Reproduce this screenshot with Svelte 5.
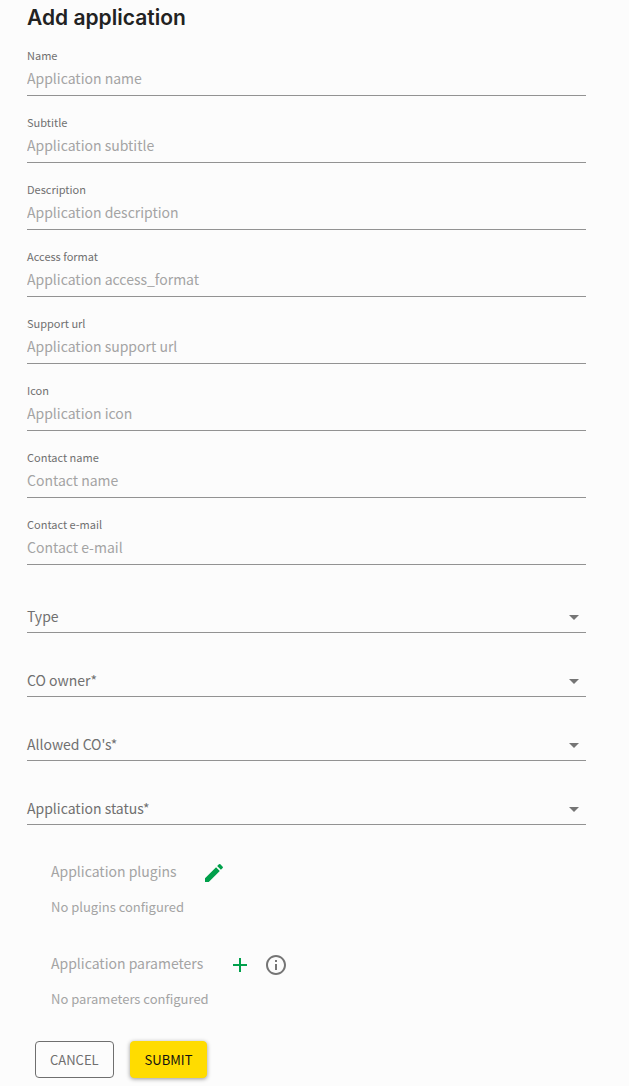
<script>
  const textFields = [
    { id: "name", label: "Name", placeholder: "Application name" },
    { id: "subtitle", label: "Subtitle", placeholder: "Application subtitle" },
    { id: "description", label: "Description", placeholder: "Application description" },
    { id: "access_format", label: "Access format", placeholder: "Application access_format" },
    { id: "support_url", label: "Support url", placeholder: "Application support url" },
    { id: "icon", label: "Icon", placeholder: "Application icon" },
    { id: "contact_name", label: "Contact name", placeholder: "Contact name" },
    { id: "contact_email", label: "Contact e-mail", placeholder: "Contact e-mail" }
  ];

  const selectFields = [
    { id: "type", label: "Type", options: ["Video", "Music", "Webinar", "Dialogue"] },
    { id: "owner", label: "CO owner*", options: ["Production", "Education"] },
    { id: "allowed", label: "Allowed CO's*", options: ["Production", "Education"] },
    { id: "status", label: "Application status*", options: ["Active", "Inactive"] }
  ];

  let values = $state({
    name: "",
    subtitle: "",
    description: "",
    access_format: "",
    support_url: "",
    icon: "",
    contact_name: "",
    contact_email: "",
    type: "",
    owner: "",
    allowed: "",
    status: ""
  });

  function handleSubmit(event) {
    event.preventDefault();
  }
</script>

<main>
  <h1>Add application</h1>

  <form onsubmit={handleSubmit}>
    <div class="text-fields">
      {#each textFields as field}
        <div class="field">
          <label for={field.id}>{field.label}</label>
          <input id={field.id} type="text" placeholder={field.placeholder} bind:value={values[field.id]} />
        </div>
      {/each}
    </div>

    <div class="select-fields">
      {#each selectFields as field}
        <div class="select">
          <select id={field.id} bind:value={values[field.id]}>
            <option value="" hidden></option>
            {#each field.options as option}
              <option value={option}>{option}</option>
            {/each}
          </select>
          <label for={field.id} class:filled={values[field.id]}>{field.label}</label>
          <svg viewBox="0 0 24 24" aria-hidden="true"><path d="M7 10l5 5 5-5z" /></svg>
        </div>
      {/each}
    </div>

    <div class="sections">
      <section>
        <div class="section-title">
          <h2>Application plugins</h2>
          <button type="button" class="icon-button" aria-label="Edit plugins">
            <svg viewBox="0 0 24 24">
              <path d="M3 17.25V21h3.75L17.81 9.94l-3.75-3.75L3 17.25zM20.71 7.04c.39-.39.39-1.02 0-1.41l-2.34-2.34a.9959.9959 0 0 0-1.41 0l-1.83 1.83 3.75 3.75 1.83-1.83z" />
            </svg>
          </button>
        </div>
        <p>No plugins configured</p>
      </section>

      <section>
        <div class="section-title">
          <h2>Application parameters</h2>
          <button type="button" class="icon-button" aria-label="Add parameter">
            <svg viewBox="0 0 24 24"><path d="M19 13h-6v6h-2v-6H5v-2h6V5h2v6h6v2z" /></svg>
          </button>
          <button type="button" class="icon-button info" aria-label="About parameters">
            <svg viewBox="0 0 24 24">
              <path d="M11 17h2v-6h-2v6zm1-15C6.48 2 2 6.48 2 12s4.48 10 10 10 10-4.48 10-10S17.52 2 12 2zm0 18c-4.41 0-8-3.59-8-8s3.59-8 8-8 8 3.59 8 8-3.59 8-8 8zM11 9h2V7h-2v2z" />
            </svg>
          </button>
        </div>
        <p>No parameters configured</p>
      </section>
    </div>

    <div class="actions">
      <button type="button" class="cancel">CANCEL</button>
      <button type="submit" class="submit">SUBMIT</button>
    </div>
  </form>
</main>

<style>
  :global(body) {
    margin: 0;
    background: #fcfcfc;
  }

  main {
    padding: 4px 43px 8px 27px;
    font-family: "Noto Sans CJK SC", "Noto Sans", sans-serif;
    font-size: 14px;
    color: #222;
  }

  h1 {
    margin: 0 0 15px;
    font-family: Inter, sans-serif;
    font-size: 21px;
    line-height: 28px;
    font-weight: 600;
  }

  input,
  select,
  button {
    font: inherit;
  }

  .text-fields {
    display: grid;
    gap: 18px;
  }

  .field {
    display: grid;
  }

  .field label {
    font-size: 11px;
    line-height: 16px;
    color: #707070;
  }

  .field input,
  .select select {
    box-sizing: border-box;
    width: 100%;
    min-width: 0;
    padding: 0 0 2px;
    border: 0;
    border-bottom: 1px solid #929292;
    border-radius: 0;
    outline: 0;
    background: transparent;
    color: inherit;
  }

  .field input {
    height: 33px;
  }

  .field input::placeholder {
    color: #a4a4a4;
    opacity: 1;
  }

  .select-fields {
    display: grid;
    gap: 32px;
    margin: 36px 0;
  }

  .select {
    display: grid;
    align-items: center;
  }

  .select > * {
    grid-area: 1 / 1;
  }

  .select select {
    height: 32px;
    appearance: none;
  }

  .select label {
    padding-bottom: 2px;
    color: #707070;
    pointer-events: none;
  }

  .select label.filled {
    opacity: 0;
  }

  .select svg {
    justify-self: end;
    width: 24px;
    height: 24px;
    fill: #757575;
    pointer-events: none;
  }

  .sections {
    display: grid;
    gap: 34px;
    margin-bottom: 30px;
    padding: 0 24px;
    color: #a4a4a4;
  }

  .section-title {
    display: flex;
    align-items: center;
    height: 24px;
  }

  h2 {
    margin: 0 13px 0 0;
    padding-bottom: 4px;
    font-size: 14px;
    line-height: 22px;
    font-weight: 400;
  }

  section p {
    margin: 10px 0 0;
    font-size: 13px;
    line-height: 24px;
  }

  .icon-button {
    display: flex;
    margin-left: 12px;
    padding: 0;
    border: 0;
    background: none;
    color: #00a04b;
    cursor: pointer;
  }

  .icon-button.info {
    color: #757575;
  }

  .icon-button svg {
    width: 24px;
    height: 24px;
    fill: currentColor;
  }

  .actions {
    display: flex;
    gap: 16px;
    padding: 0 8px;
  }

  .actions button {
    box-sizing: border-box;
    height: 37px;
    padding: 0 14px;
    border: 1px solid #6f6f6f;
    border-radius: 4px;
    background: transparent;
    color: #6f6f6f;
    font-size: 13px;
    line-height: 24px;
    cursor: pointer;
  }

  .actions .submit {
    border-color: #ffdc00;
    background: #ffdc00;
    color: #111;
    box-shadow: 0 1px 4px rgba(0, 0, 0, 0.4);
  }
</style>
